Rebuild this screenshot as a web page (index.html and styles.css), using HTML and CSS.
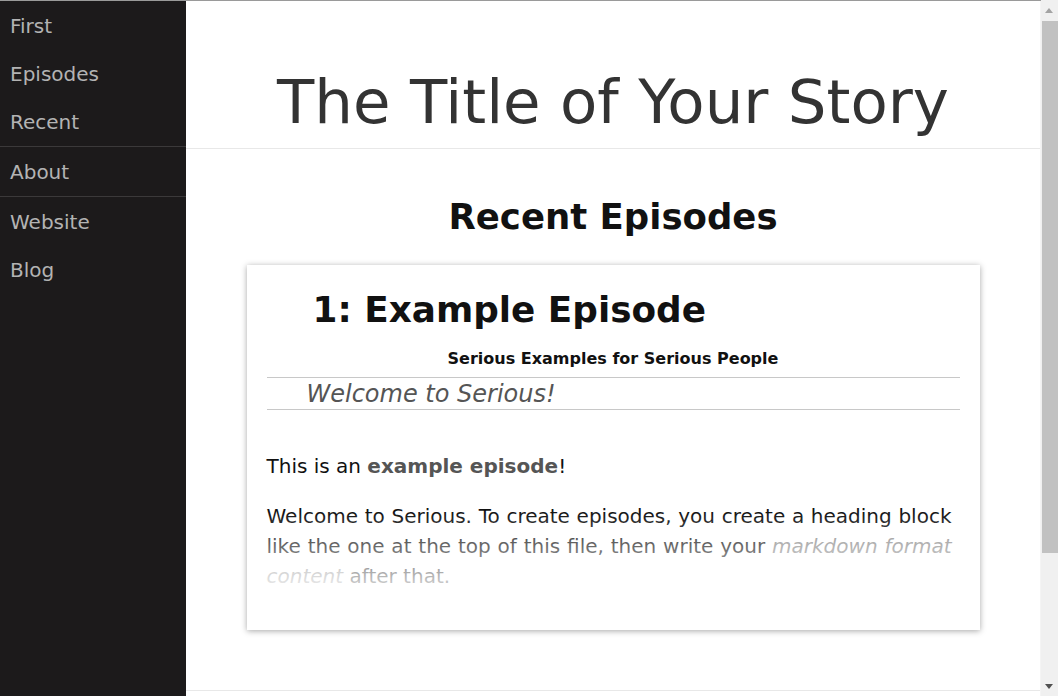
FILE: index.html
```html
<!DOCTYPE html>
<html>
<head>
<meta charset="utf-8">
<link rel="stylesheet" href="styles.css">
</head>
<body>
<div class="page">
  <nav class="sidebar">
    <div class="nav-group">
      <a class="nav-item">First</a>
      <a class="nav-item">Episodes</a>
      <a class="nav-item">Recent</a>
    </div>
    <div class="nav-group">
      <a class="nav-item">About</a>
    </div>
    <div class="nav-group last">
      <a class="nav-item">Website</a>
      <a class="nav-item">Blog</a>
    </div>
  </nav>
  <main class="main">
    <header class="header">
      <h1 class="site-title">The Title of Your Story</h1>
    </header>
    <section class="recent">
      <h2 class="recent-title">Recent Episodes</h2>
      <article class="card">
        <h3 class="ep-title">1: Example Episode</h3>
        <div class="ep-sub">Serious Examples for Serious People</div>
        <div class="ep-lede">Welcome to Serious!</div>
        <div class="ep-body">
          <p>This is an <strong>example episode</strong>!</p>
          <p class="justify">Welcome to Serious. To create episodes, you create a heading block like the one at the top of this file, then write your <em class="link">markdown format content</em> after that.</p>
          <div class="fade"></div>
        </div>
      </article>
    </section>
    <div class="footer-line"></div>
  </main>
</div>
<div class="scrollbar">
  <div class="sb-btn up"></div>
  <div class="sb-track"><div class="sb-thumb"></div></div>
  <div class="sb-btn down"></div>
</div>
</body>
</html>
```
FILE: styles.css
```css
html, body {
  margin: 0;
  padding: 0;
}
body {
  width: 1058px;
  height: 696px;
  overflow: hidden;
  display: flex;
  font-family: "DejaVu Sans", Verdana, sans-serif;
  background: #fff;
}
.page {
  flex: 1;
  display: flex;
  border-top: 1px solid #9a9a9a;
  min-width: 0;
}
.sidebar {
  width: 186px;
  flex: none;
  background: #1c1a1b;
  display: flex;
  flex-direction: column;
}
.nav-group {
  display: flex;
  flex-direction: column;
  padding: 0 0 1px;
  border-bottom: 1px solid #3b393a;
}
.nav-group.last {
  border-bottom: none;
}
.nav-item {
  display: block;
  height: 48px;
  line-height: 51px;
  padding-left: 10px;
  font-size: 20px;
  color: #b3b3b3;
}
.main {
  flex: 1;
  display: flex;
  flex-direction: column;
  border-right: 1px solid #f4f4f4;
}
.header {
  height: 147px;
  border-bottom: 1px solid #e8e8e8;
  display: flex;
  align-items: flex-end;
  justify-content: center;
}
.site-title {
  margin: 0 0 10px;
  font-family: "DejaVu Sans", sans-serif;
  font-weight: normal;
  font-size: 61px;
  color: #333;
  line-height: 1.2;
}
.recent {
  display: flex;
  flex-direction: column;
  align-items: center;
}
.recent-title {
  margin: 46px 0 26px;
  font-size: 35.5px;
  font-weight: bold;
  color: #111;
  line-height: 44px;
}
.card {
  width: 693px;
  padding: 20px 20px 39px;
  background: #fff;
  box-shadow: 0 1px 6px rgba(0,0,0,0.35);
}
.ep-title {
  margin: 1px 0 0 46px;
  font-size: 35.8px;
  font-weight: bold;
  color: #111;
  line-height: 48px;
}
.ep-sub {
  text-align: center;
  font-size: 16px;
  font-weight: bold;
  color: #111;
  margin-top: 15px;
  padding-bottom: 9px;
  border-bottom: 1px solid #c8c8c8;
}
.ep-lede {
  padding: 2px 0 0 40px;
  font-size: 24px;
  font-style: italic;
  color: #555;
  line-height: 29px;
  border-bottom: 1px solid #c8c8c8;
}
.ep-body {
  position: relative;
  margin-top: 41px;
  padding-right: 8px;
  font-size: 20px;
  color: #111;
  line-height: 30px;
}
.ep-body p {
  margin: 0 0 20px;
}
.ep-body p:last-of-type {
  margin-bottom: 0;
}
.ep-body strong {
  color: #555;
}
.justify {
  text-align: justify;
}
.link {
  color: #888;
}
.fade {
  position: absolute;
  left: 0;
  right: 0;
  bottom: 0;
  height: 80px;
  background: linear-gradient(to bottom, rgba(255,255,255,0), rgba(255,255,255,0.85));
}
.footer-line {
  margin-top: 60px;
  border-top: 1px solid #e8e8e8;
}
.scrollbar {
  width: 17px;
  flex: none;
  background: #f0f0f0;
  display: flex;
  flex-direction: column;
}
.sb-btn {
  height: 21px;
  position: relative;
}
.sb-btn::after {
  content: "";
  position: absolute;
  left: 4px;
  border-left: 4.5px solid transparent;
  border-right: 4.5px solid transparent;
}
.sb-btn.up::after {
  top: 8px;
  border-bottom: 5px solid #a3a3a3;
}
.sb-btn.down::after {
  top: 9px;
  border-top: 5px solid #505050;
}
.sb-track {
  flex: 1;
}
.sb-thumb {
  height: 532px;
  margin-left: 1px;
  background: #c1c1c1;
}
```
